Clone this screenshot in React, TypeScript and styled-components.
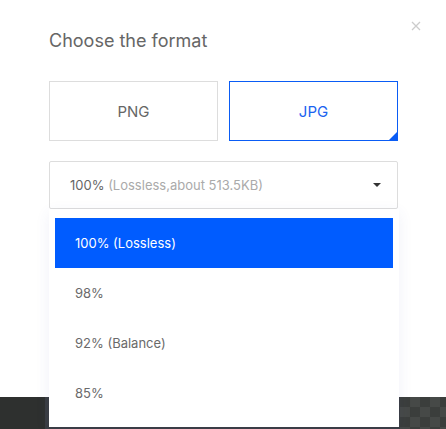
import React from 'react';
import styled, { createGlobalStyle } from 'styled-components';

const GlobalStyle = createGlobalStyle`
  html, body {
    margin: 0;
    padding: 0;
    background: #2e3030;
    font-family: Inter, "Open Sans", Arial, sans-serif;
  }
`;

const Page = styled.div`
  width: 446px;
  height: 429px;
  display: flex;
  flex-direction: column;
  position: relative;
  overflow: hidden;
`;

const Modal = styled.div`
  height: 397px;
  background: #ffffff;
  box-sizing: border-box;
  padding: 28px 48px 0 49px;
  position: relative;
`;

const Close = styled.button`
  position: absolute;
  top: 19px;
  right: 23px;
  width: 14px;
  height: 14px;
  padding: 0;
  border: none;
  background: none;
  cursor: pointer;
`;

const Title = styled.h2`
  margin: 0;
  font-size: 18px;
  font-weight: 400;
  color: #666666;
  line-height: 26px;
`;

const FormatRow = styled.div`
  display: flex;
  gap: 11px;
  margin-top: 27px;
`;

const FormatButton = styled.div<{ $active?: boolean }>`
  flex: 1;
  height: 60px;
  box-sizing: border-box;
  border: 1px solid ${p => (p.$active ? '#0a5cf5' : '#dddddd')};
  display: flex;
  align-items: center;
  justify-content: center;
  font-size: 15px;
  color: ${p => (p.$active ? '#1a63f0' : '#666666')};
  position: relative;
  cursor: pointer;

  ${p =>
    p.$active &&
    `
    &::after {
      content: '';
      position: absolute;
      right: 0;
      bottom: 0;
      width: 0;
      height: 0;
      border-style: solid;
      border-width: 0 0 8px 8px;
      border-color: transparent transparent #0a5cf5 transparent;
    }
  `}
`;

const SelectWrap = styled.div`
  margin-top: 20px;
  position: relative;
`;

const SelectBox = styled.div`
  height: 48px;
  box-sizing: border-box;
  border: 1px solid #dddddd;
  border-radius: 2px;
  display: flex;
  align-items: center;
  justify-content: space-between;
  padding: 0 16px 0 20px;
  font-size: 13px;
`;

const Value = styled.span`
  color: #666666;
`;

const Hint = styled.span`
  color: #aaaaaa;
`;

const Caret = styled.span`
  width: 0;
  height: 0;
  border-left: 4px solid transparent;
  border-right: 4px solid transparent;
  border-top: 4px solid #333333;
`;

const Dropdown = styled.ul`
  position: absolute;
  top: 48px;
  left: 0;
  right: -1px;
  height: 218px;
  margin: 0;
  padding: 9px 6px 0;
  list-style: none;
  background: #ffffff;
  box-shadow: 0 4px 14px rgba(60, 80, 160, 0.08);
  box-sizing: border-box;
  overflow: hidden;
  z-index: 2;
`;

const Option = styled.li<{ $selected?: boolean }>`
  height: 50px;
  display: flex;
  align-items: center;
  padding-left: 20px;
  font-size: 13px;
  color: ${p => (p.$selected ? '#ffffff' : '#6a6a6a')};
  background: ${p => (p.$selected ? '#005cff' : 'transparent')};
  cursor: pointer;
`;

const Backdrop = styled.div`
  flex: 1;
  display: flex;
`;

const Panel = styled.div<{ $w?: number; $bg: string }>`
  width: ${p => (p.$w ? `${p.$w}px` : 'auto')};
  flex: ${p => (p.$w ? 'none' : 1)};
  background: ${p => p.$bg};
`;

const Checker = styled.div`
  flex: none;
  width: 46px;
  background-color: #3b3e3c;
  background-image:
    linear-gradient(45deg, #464947 25%, transparent 25%, transparent 75%, #464947 75%),
    linear-gradient(45deg, #464947 25%, transparent 25%, transparent 75%, #464947 75%);
  background-size: 20px 20px;
  background-position: 0 0, 10px 10px;
`;

const options = ['100% (Lossless)', '98%', '92% (Balance)', '85%'];

export default function App() {
  return (
    <>
      <GlobalStyle />
      <Page>
        <Modal>
          <Close aria-label="close">
            <svg width="14" height="14" viewBox="0 0 14 14">
              <path d="M3 3L11 11M11 3L3 11" stroke="#cccccc" strokeWidth="1.3" />
            </svg>
          </Close>
          <Title>Choose the format</Title>
          <FormatRow>
            <FormatButton>PNG</FormatButton>
            <FormatButton $active>JPG</FormatButton>
          </FormatRow>
          <SelectWrap>
            <SelectBox>
              <span>
                <Value>100%</Value> <Hint>(Lossless,about 513.5KB)</Hint>
              </span>
              <Caret />
            </SelectBox>
            <Dropdown>
              {options.map((o, i) => (
                <Option key={o} $selected={i === 0}>
                  {o}
                </Option>
              ))}
            </Dropdown>
          </SelectWrap>
        </Modal>
        <Backdrop>
          <Panel $w={45} $bg="#2e302f" />
          <Panel $bg="#3a3d42" />
          <Checker />
        </Backdrop>
      </Page>
    </>
  );
}
